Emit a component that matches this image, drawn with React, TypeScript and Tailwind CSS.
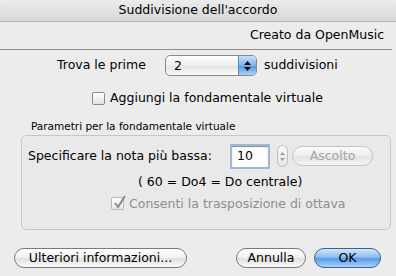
import type { ReactNode } from 'react';

const font = 'font-["Lucida_Grande","DejaVu_Sans",sans-serif]';

function AquaButton({ children, width, primary, disabled }: { children: ReactNode; width: string; primary?: boolean; disabled?: boolean }) {
  const base = 'flex h-[20px] items-center justify-center rounded-full border text-[12.5px] leading-none';
  const look = primary
    ? 'border-[#3a5f9c] bg-[linear-gradient(to_bottom,#d3e6fb_0%,#8ebdf1_45%,#5b9be6_55%,#a9d4fb_100%)] text-black'
    : disabled
      ? 'border-[#c4c4c4] bg-[linear-gradient(to_bottom,#fbfbfb_0%,#ececec_50%,#e2e2e2_55%,#f6f6f6_100%)] text-[#a4a4a4]'
      : 'border-[#7a7a7a] bg-[linear-gradient(to_bottom,#ffffff_0%,#f2f2f2_45%,#e0e0e0_55%,#fbfbfb_100%)] text-black';
  return <div className={`${base} ${look} ${width}`}>{children}</div>;
}

export default function App() {
  return (
    <div className={`${font} flex h-[276px] w-[396px] flex-col overflow-hidden bg-[#ececec] text-[12.5px] text-black`}>
      <div className="flex h-[22px] shrink-0 items-center justify-center rounded-t-[5px] border-b border-[#b4b4b4] bg-[linear-gradient(to_bottom,#ececec,#d6d6d6)]">
        Suddivisione dell'accordo
      </div>

      <div className="flex h-[27px] items-center justify-end pr-[12px]">Creato da OpenMusic</div>
      <div className="mr-[4px] h-px bg-[#8c8c8c]" />

      <div className="mt-[5px] flex items-center pl-[57px]">
        <span className="w-[108px]">Trova le prime</span>
        <div className="flex h-[21px] w-[92px] overflow-hidden rounded-[5px] border border-[#8a8a8a] bg-[linear-gradient(to_bottom,#ffffff,#eeeeee_50%,#e4e4e4_55%,#fafafa)]">
          <span className="flex-1 pl-[8px] pt-[1px]">2</span>
          <div className="flex w-[18px] flex-col items-center justify-center gap-[2px] border-l border-[#5a86c4] bg-[linear-gradient(to_bottom,#c7defa,#7fb2ee_50%,#5d9ae4_55%,#a8d2fb)]">
            <svg width="7" height="4" viewBox="0 0 7 4"><path d="M0 4 L3.5 0 L7 4Z" fill="#111" /></svg>
            <svg width="7" height="4" viewBox="0 0 7 4"><path d="M0 0 L3.5 4 L7 0Z" fill="#111" /></svg>
          </div>
        </div>
        <span className="ml-[7px]">suddivisioni</span>
      </div>

      <div className="mt-[13px] flex items-center pl-[92px]">
        <div className="h-[13px] w-[13px] rounded-[2px] border border-[#8a8a8a] bg-[linear-gradient(to_bottom,#fdfdfd,#e2e2e2)]" />
        <span className="ml-[5px]">Aggiungi la fondamentale virtuale</span>
      </div>

      <div className="mt-[11px] pl-[31px] text-[10.5px] leading-[14px]">Parametri per la fondamentale virtuale</div>

      <div className="mx-[5px] ml-[21px] mt-[2px] flex h-[95px] flex-col rounded-[5px] border border-[#c6c6c6] bg-[#e8e8e8]/60 pl-[6px] pt-[8px]">
        <div className="flex items-center">
          <span className="w-[202px]">Specificare la nota più bassa:</span>
          <div className="flex h-[25px] w-[40px] items-center border-2 border-[#9fb8da] bg-white pl-[5px] shadow-[inset_0_1px_1px_#888]">10</div>
          <div className="ml-[7px] flex h-[22px] w-[11px] flex-col items-center justify-center gap-[3px] rounded-full border border-[#bdbdbd] bg-[linear-gradient(to_bottom,#fafafa,#e6e6e6)]">
            <svg width="5" height="3" viewBox="0 0 5 3"><path d="M0 3 L2.5 0 L5 3Z" fill="#a0a0a0" /></svg>
            <svg width="5" height="3" viewBox="0 0 5 3"><path d="M0 0 L2.5 3 L5 0Z" fill="#a0a0a0" /></svg>
          </div>
          <div className="ml-[4px]">
            <AquaButton width="w-[81px]" disabled>Ascolto</AquaButton>
          </div>
        </div>
        <div className="mt-[4px] pl-[110px]">( 60 = Do4 = Do centrale)</div>
        <div className="mt-[3px] flex items-center pl-[83px] text-[#8e8e8e]">
          <div className="relative h-[13px] w-[13px] rounded-[2px] border border-[#b8b8b8] bg-[linear-gradient(to_bottom,#fdfdfd,#e6e6e6)]">
            <svg className="absolute -top-[3px] left-[1px]" width="13" height="14" viewBox="0 0 13 14">
              <path d="M2 8 L5 12 L12 1" fill="none" stroke="#8a8a8a" strokeWidth="2" />
            </svg>
          </div>
          <span className="ml-[5px]">Consenti la trasposizione di ottava</span>
        </div>
      </div>

      <div className="mt-[18px] flex items-center pl-[14px] pr-[15px]">
        <AquaButton width="w-[173px]">Ulteriori informazioni...</AquaButton>
        <div className="flex-1" />
        <AquaButton width="w-[70px]">Annulla</AquaButton>
        <div className="ml-[8px]">
          <AquaButton width="w-[67px]" primary>OK</AquaButton>
        </div>
      </div>
    </div>
  );
}
